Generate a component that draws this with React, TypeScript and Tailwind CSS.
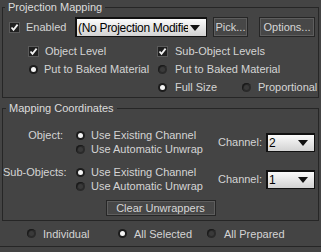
import React from "react";

const font = { fontFamily: '"Liberation Sans", Arial, sans-serif' };

function Check() {
  return (
    <span className="w-[11px] h-[11px] bg-[#1f1f1f] border border-[#5a5a5a] flex items-center justify-center shrink-0">
      <svg width="9" height="9" viewBox="0 0 9 9">
        <path d="M1.5 4.5 L3.5 6.8 L7.6 1.6" fill="none" stroke="#f2f2f2" strokeWidth="1.8" />
      </svg>
    </span>
  );
}

function Radio({ on }: { on?: boolean }) {
  return (
    <span
      className={
        "w-[9px] h-[9px] rounded-full flex items-center justify-center shrink-0 " +
        (on ? "bg-[#1c1c1c]" : "bg-[#2a2a2a] shadow-[inset_1px_1px_0_#1a1a1a]")
      }
    >
      {on ? (
        <span className="w-[5px] h-[5px] rounded-full bg-[#f4f4f4]" />
      ) : (
        <span className="w-[5px] h-[5px] rounded-full bg-[#3a3a3a]" />
      )}
    </span>
  );
}

function Btn({ children, className }: { children: React.ReactNode; className: string }) {
  return (
    <div
      className={
        "border border-[#262626] bg-[#474747] shadow-[inset_0_0_0_1px_#5e5e5e] flex items-center justify-center text-[#d6d6d6] whitespace-nowrap " +
        className
      }
    >
      {children}
    </div>
  );
}

function Drop({ label, className }: { label: string; className: string }) {
  return (
    <div
      className={
        "border-t-2 border-l-2 border-b border-r border-[#111] bg-gradient-to-b from-[#fbfbfb] to-[#d2d2d2] flex items-center pl-[1px] pr-[6px] text-black text-[12px] tracking-[-0.3px] overflow-hidden " +
        className
      }
    >
      <span className="flex-1 whitespace-nowrap overflow-hidden">{label}</span>
      <svg width="10" height="6" viewBox="0 0 10 6" className="shrink-0 ml-[2px]">
        <path d="M0 0 H10 L5 6 Z" fill="#111" />
      </svg>
    </div>
  );
}

export default function App() {
  return (
    <div
      className="w-[321px] h-[252px] bg-[#444444] text-[#d4d4d4] text-[11px] leading-[14px] overflow-hidden whitespace-nowrap"
      style={font}
    >
      <div className="pl-[2px] pr-[2px]">
        {/* Projection Mapping */}
        <fieldset className="border border-[#262626] pb-[1px]">
          <legend className="ml-[2px] px-[3px] text-[11px] text-[#dcdcdc] leading-[14px]">Projection Mapping</legend>
          <div className="flex items-center h-[20px] mt-[3px] ml-[6px]">
            <Check />
            <span className="ml-[6px] w-[49px]">Enabled</span>
            <Drop label="(No Projection Modifie" className="w-[132px] h-[20px]" />
            <Btn className="ml-[6px] w-[35px] h-[20px]">Pick...</Btn>
            <Btn className="ml-[11px] w-[56px] h-[20px]">Options...</Btn>
          </div>
          <div className="grid grid-cols-[129px_85px_1fr] ml-[25px] mt-[5px]">
            <div className="flex items-center gap-[6px] h-[18px]">
              <Check />
              <span>Object Level</span>
            </div>
            <div className="col-span-2 flex items-center gap-[7px] h-[18px]">
              <Check />
              <span>Sub-Object Levels</span>
            </div>
            <div className="flex items-center gap-[6px] h-[18px] pl-[1px]">
              <Radio on />
              <span>Put to Baked Material</span>
            </div>
            <div className="col-span-2 flex items-center gap-[8px] h-[18px] pl-[1px]">
              <Radio />
              <span>Put to Baked Material</span>
            </div>
            <div className="h-[18px]" />
            <div className="flex items-center gap-[8px] h-[18px] pl-[1px]">
              <Radio on />
              <span>Full Size</span>
            </div>
            <div className="flex items-center gap-[7px] h-[18px]">
              <Radio />
              <span>Proportional</span>
            </div>
          </div>
        </fieldset>

        {/* Mapping Coordinates */}
        <fieldset className="border border-[#262626] mt-[3px] pb-[4px]">
          <legend className="ml-[3px] px-[3px] text-[11px] text-[#dcdcdc] leading-[14px]">Mapping Coordinates</legend>
          {[
            { label: "Object:", ch: "2", mt: "mt-[13px]" },
            { label: "Sub-Objects:", ch: "1", mt: "mt-[9px]" },
          ].map((g) => (
            <div key={g.label} className={"flex items-center " + g.mt}>
              <div className="w-[60px] text-right self-start leading-[14px]">{g.label}</div>
              <div className="ml-[13px] flex flex-col">
                <div className="flex items-center gap-[6px] h-[14px]">
                  <Radio on />
                  <span>Use Existing Channel</span>
                </div>
                <div className="flex items-center gap-[6px] h-[14px]">
                  <Radio />
                  <span>Use Automatic Unwrap</span>
                </div>
              </div>
              <span className="ml-auto mr-[4px]">Channel:</span>
              <Drop label={g.ch} className="w-[49px] h-[19px] mr-[3px]" />
            </div>
          ))}
          <div className="flex justify-center mt-[7px]">
            <Btn className="w-[110px] h-[16px]">Clear Unwrappers</Btn>
          </div>
        </fieldset>
      </div>

      {/* Selection scope */}
      <div className="flex items-center h-[26px] border-b border-[#262626]">
        <div className="flex items-center gap-[7px] ml-[27px] w-[91px]">
          <Radio />
          <span>Individual</span>
        </div>
        <div className="flex items-center gap-[7px] w-[89px]">
          <Radio on />
          <span>All Selected</span>
        </div>
        <div className="flex items-center gap-[8px]">
          <Radio />
          <span>All Prepared</span>
        </div>
      </div>
    </div>
  );
}
